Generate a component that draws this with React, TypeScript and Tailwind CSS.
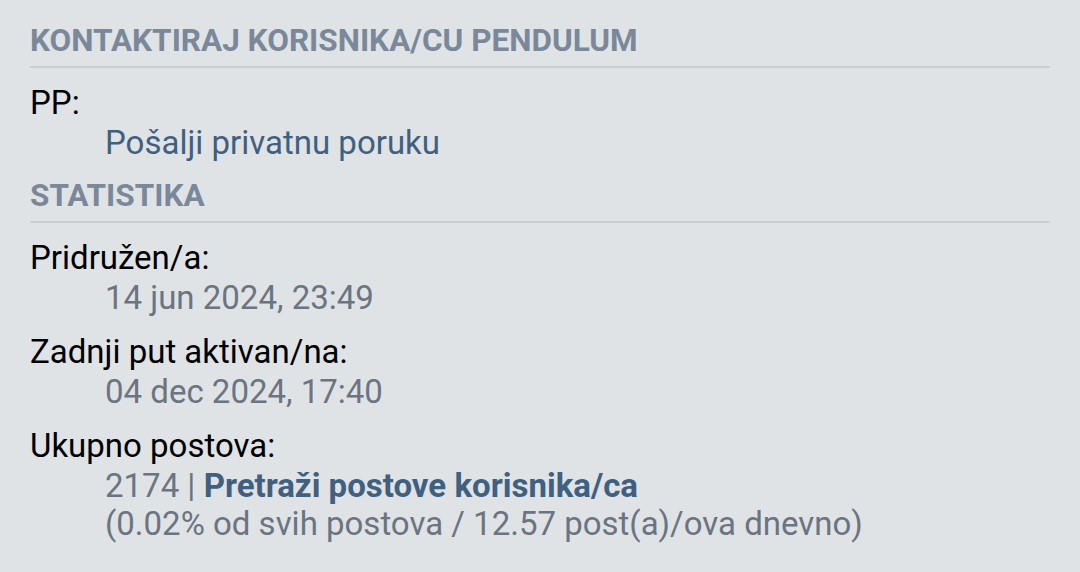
const Heading = ({ children }: { children: React.ReactNode }) => (
  <h3 className="text-[31.5px] font-bold uppercase text-[#7a8899] leading-[38px] pb-[6px] border-b-2 border-[#cbcdcf]">
    {children}
  </h3>
)

const Row = ({ label, children }: { label: string; children: React.ReactNode }) => (
  <div className="mt-[15px]">
    <dt className="text-black leading-[40px]">{label}</dt>
    <dd className="pl-[75px] leading-[39px] text-[#6b7480]">{children}</dd>
  </div>
)

export default function App() {
  return (
    <div className="w-[1080px] h-[572px] bg-[#dfe3e6] px-[30px] pt-[22px] text-[33px] font-['Roboto',sans-serif] overflow-hidden">
      <Heading>Kontaktiraj korisnika/cu Pendulum</Heading>
      <dl className="mb-[15px]">
        <Row label="PP:">
          <a className="text-[#41607f]">Pošalji privatnu poruku</a>
        </Row>
      </dl>
      <Heading>Statistika</Heading>
      <dl>
        <Row label="Pridružen/a:">14 jun 2024, 23:49</Row>
        <Row label="Zadnji put aktivan/na:">04 dec 2024, 17:40</Row>
        <Row label="Ukupno postova:">
          <div>
            2174 | <a className="font-bold text-[#41607f]">Pretraži postove korisnika/ca</a>
          </div>
          <div className="leading-[38px]">(0.02% od svih postova / 12.57 post(a)/ova dnevno)</div>
        </Row>
      </dl>
    </div>
  )
}
